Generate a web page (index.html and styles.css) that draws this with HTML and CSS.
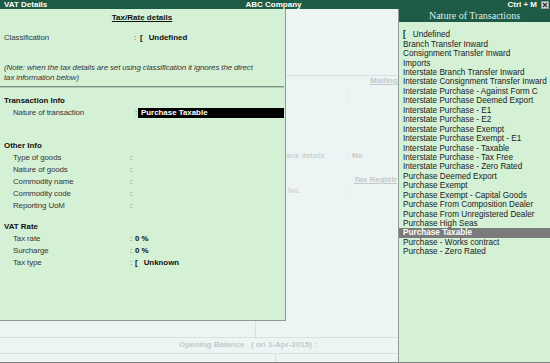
FILE: index.html
```html
<!DOCTYPE html>
<html lang="en">
<head>
  <meta charset="UTF-8" />
  <title>VAT Details</title>
  <link rel="stylesheet" href="styles.css">
</head>
<body>
  <div class="screen">
    <header class="titlebar">
      <span class="title-left">VAT Details</span>
      <span class="title-center">ABC Company</span>
      <span class="title-right">
        Ctrl + M
        <svg class="close-btn" width="8" height="8" viewBox="0 0 8 8">
          <rect x="0.5" y="0.5" width="7" height="7" fill="#d6d6d6" stroke="#9a9a9a" />
          <path d="M2 2 L6 6 M6 2 L2 6" stroke="#333" stroke-width="1.2" />
        </svg>
      </span>
    </header>

    <div class="workspace">
      <!-- ledger form behind the popups -->
      <div class="ledger-form">
        <div class="form-rule"></div>
        <div class="form-head mailing">Mailing</div>
        <div class="form-row colon-only"><span class="form-colon">:</span></div>
        <div class="form-row colon-only"><span class="form-colon">:</span></div>
        <div class="form-row bank">
          <span class="form-label">Bank details</span>
          <span class="form-colon">:</span>
          <span class="form-value">No</span>
        </div>
        <div class="form-head tax-reg">Tax Registr</div>
        <div class="form-row pan">
          <span class="form-label">No.</span>
          <span class="form-colon">:</span>
        </div>

        <div class="balance-rows">
          <div class="balance-row first"><div class="balance-cell cell-a"></div></div>
          <div class="balance-row second">
            <span class="ob-label">Opening Balance</span>
            <span class="ob-date">( on 1-Apr-2015) :</span>
          </div>
          <div class="balance-row third"><div class="balance-cell cell-b"></div></div>
        </div>
      </div>

      <section class="vat-panel">
        <div class="panel-title"><span>Tax/Rate details</span></div>

        <div class="class-row">
          <span class="class-label">Classification</span>
          <span class="class-colon">:</span>
          <span class="class-value"><span class="mark">[</span>Undefined</span>
        </div>

        <p class="note">(Note: when the tax details are set using classification it ignores the direct<br>tax information below)</p>

        <div class="separator"></div>

        <div class="section-title first-section">Transaction Info</div>
        <div class="nature-row">
          <span class="nature-label">Nature of transaction</span>
          <span class="nature-colon">:</span>
          <span class="nature-value">Purchase Taxable</span>
        </div>

        <div class="section-title other-section">Other Info</div>
        <div class="field-list">
          <div class="field-row"><span class="field-label">Type of goods</span><span class="field-colon">:</span></div>
          <div class="field-row"><span class="field-label">Nature of goods</span><span class="field-colon">:</span></div>
          <div class="field-row"><span class="field-label">Commodity name</span><span class="field-colon">:</span></div>
          <div class="field-row"><span class="field-label">Commodity code</span><span class="field-colon">:</span></div>
          <div class="field-row"><span class="field-label">Reporting UoM</span><span class="field-colon">:</span></div>
        </div>

        <div class="section-title vat-section">VAT Rate</div>
        <div class="field-list">
          <div class="field-row"><span class="field-label">Tax rate</span><span class="field-colon">:</span><span class="field-value">0 %</span></div>
          <div class="field-row"><span class="field-label">Surcharge</span><span class="field-colon">:</span><span class="field-value">0 %</span></div>
          <div class="field-row"><span class="field-label">Tax type</span><span class="field-colon">:</span><span class="field-value"><span class="mark">[</span>Unknown</span></div>
        </div>
      </section>

      <aside class="nature-panel">
        <div class="nature-head">Nature of Transactions</div>
        <ul class="nature-list">
          <li><span class="mark list-mark">[</span>Undefined</li>
          <li>Branch Transfer Inward</li>
          <li>Consignment Transfer Inward</li>
          <li>Imports</li>
          <li>Interstate Branch Transfer Inward</li>
          <li>Interstate Consignment Transfer Inward</li>
          <li>Interstate Purchase - Against Form C</li>
          <li>Interstate Purchase Deemed Export</li>
          <li>Interstate Purchase - E1</li>
          <li>Interstate Purchase - E2</li>
          <li>Interstate Purchase Exempt</li>
          <li>Interstate Purchase Exempt - E1</li>
          <li>Interstate Purchase - Taxable</li>
          <li>Interstate Purchase - Tax Free</li>
          <li>Interstate Purchase - Zero Rated</li>
          <li>Purchase Deemed Export</li>
          <li>Purchase Exempt</li>
          <li>Purchase Exempt - Capital Goods</li>
          <li>Purchase From Composition Dealer</li>
          <li>Purchase From Unregistered Dealer</li>
          <li>Purchase High Seas</li>
          <li class="selected">Purchase Taxable</li>
          <li>Purchase - Works contract</li>
          <li>Purchase - Zero Rated</li>
        </ul>
      </aside>
    </div>
  </div>
</body>
</html>
```

FILE: styles.css
```css
* {
  margin: 0;
  padding: 0;
  box-sizing: border-box;
}

body {
  width: 550px;
  height: 363px;
  overflow: hidden;
  font-family: 'Liberation Sans', Arial, sans-serif;
  font-size: 8px;
  background: #edf5f4;
}

.screen {
  width: 550px;
  height: 363px;
  display: flex;
  flex-direction: column;
}

/* title bar */

.titlebar {
  height: 9px;
  display: grid;
  grid-template-columns: 1fr auto 1fr;
  align-items: center;
  padding: 0 1px 0 4px;
  background: #1d5b46;
  color: #fff;
  font-weight: bold;
  font-size: 8px;
  line-height: 9px;
}

.title-center {
  padding-right: 6px;
}

.title-right {
  justify-self: end;
  display: flex;
  align-items: center;
  gap: 4px;
}

.close-btn {
  display: block;
}

/* workspace */

.workspace {
  position: relative;
  flex: 1;
  border-bottom: 1px solid #7e8482;
}

.ledger-form {
  width: 398px;
  height: 100%;
  overflow: hidden;
  display: flex;
  flex-direction: column;
  color: #c3c9c8;
}

.form-rule {
  margin-top: 66px;
  border-top: 1px solid #d9e1e0;
}

.form-head {
  height: 9px;
  line-height: 9px;
  font-weight: bold;
  text-decoration: underline;
  white-space: nowrap;
}

.mailing {
  padding-left: 370px;
}

.tax-reg {
  margin-top: 14px;
  padding-left: 354px;
}

.form-row {
  display: flex;
  height: 10px;
  line-height: 10px;
  white-space: nowrap;
}

.colon-only {
  padding-left: 347px;
  color: #d3d9d8;
}

.colon-only:first-of-type {
  margin-top: 2px;
}

.bank {
  margin-top: 46px;
  padding-left: 281px;
}

.bank .form-label {
  width: 66px;
}

.pan {
  margin-top: 2px;
  padding-left: 288px;
}

.pan .form-label {
  width: 59px;
}

.form-colon {
  width: 5px;
}

.form-value {
  font-weight: bold;
}

.balance-rows {
  margin-top: auto;
}

.balance-row {
  display: flex;
  border-bottom: 1px solid #d9e1e0;
}

.balance-row.first {
  height: 17px;
}

.balance-row.second {
  height: 16px;
  line-height: 13px;
  font-weight: bold;
  padding-left: 179px;
  white-space: nowrap;
}

.balance-row.third {
  height: 8px;
  border-bottom: none;
}

.balance-cell {
  height: 100%;
  border-right: 1px solid #d9e1e0;
}

.cell-a {
  width: 256px;
}

.cell-b {
  width: 276px;
}

.ob-label {
  width: 72px;
}

/* VAT details popup */

.vat-panel {
  position: absolute;
  left: 0;
  top: 0;
  width: 286px;
  height: 312px;
  padding: 4px 1px 0 0;
  background: #d4f0d5;
  border-right: 1px solid #8c9e90;
  border-bottom: 1px solid #8c9e90;
  color: #363636;
  font-size: 7.9px;
  letter-spacing: -0.1px;
}

.panel-title {
  height: 10px;
  line-height: 10px;
  text-align: center;
  font-weight: bold;
  color: #111;
  font-size: 8px;
  letter-spacing: 0;
}

.panel-title span {
  text-decoration: underline;
}

.class-row {
  margin-top: 10px;
  display: flex;
  height: 10px;
  line-height: 10px;
  padding-left: 4px;
}

.class-label {
  width: 130px;
}

.class-colon {
  width: 6px;
}

.class-value,
.field-value,
.nature-value {
  font-weight: bold;
  color: #111;
  letter-spacing: 0;
}

.mark {
  font-weight: bold;
  margin-right: 6px;
}

.note {
  margin-top: 20px;
  padding-left: 4px;
  line-height: 10px;
  font-style: italic;
  white-space: nowrap;
}

.separator {
  margin-top: 3px;
  border-top: 1px solid #7f9283;
  border-bottom: 1px solid #b3c7b6;
}

.section-title {
  height: 10px;
  line-height: 10px;
  padding-left: 4px;
  font-weight: bold;
  color: #111;
  letter-spacing: 0;
}

.first-section {
  margin-top: 8px;
}

.other-section {
  margin-top: 23px;
}

.vat-section {
  margin-top: 10px;
}

.nature-row {
  margin-top: 2px;
  display: flex;
  height: 10px;
  line-height: 10px;
  padding-left: 13px;
}

.nature-label {
  width: 122px;
}

.nature-colon {
  width: 3px;
}

.nature-value {
  flex: 1;
  background: #000;
  color: #fff;
  padding-left: 3px;
}

.field-list {
  margin-top: 1px;
}

.field-row {
  display: flex;
  height: 12px;
  line-height: 12px;
  padding-left: 13px;
}

.field-label {
  width: 117px;
}

.field-colon {
  width: 5px;
}

/* nature of transactions list */

.nature-panel {
  position: absolute;
  right: 0;
  top: 0;
  width: 152px;
  height: 353px;
  background: #d4f0d5;
  border-left: 1px solid #8c9e90;
}

.nature-head {
  height: 13px;
  line-height: 13px;
  background: #1d5b46;
  color: #dfeee6;
  text-align: center;
  font-family: 'Liberation Serif', 'Times New Roman', serif;
  font-size: 10px;
}

.nature-list {
  list-style: none;
  padding-top: 8.3px;
  font-size: 8.2px;
  color: #222;
}

.nature-list li {
  height: 9.45px;
  line-height: 9.45px;
  padding-left: 4px;
  white-space: nowrap;
}

.nature-list li.selected {
  background: #7b7b7b;
  color: #fff;
  font-weight: bold;
}

.list-mark {
  margin-right: 7px;
}
```
